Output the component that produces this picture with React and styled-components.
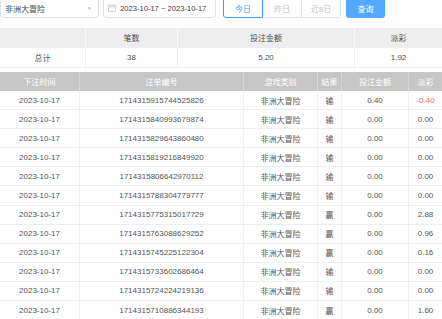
import React from "react";
import styled, { createGlobalStyle } from "styled-components";

const rows = [
  { no: "1714315915744525826", result: "输", bet: "0.40", win: "-0.40" },
  { no: "1714315840993679874", result: "输", bet: "0.00", win: "0.00" },
  { no: "1714315829643860480", result: "输", bet: "0.00", win: "0.00" },
  { no: "1714315819216849920", result: "输", bet: "0.00", win: "0.00" },
  { no: "1714315806642970112", result: "输", bet: "0.00", win: "0.00" },
  { no: "1714315788304779777", result: "输", bet: "0.00", win: "0.00" },
  { no: "1714315775315017729", result: "赢", bet: "0.00", win: "2.88" },
  { no: "1714315763088629252", result: "赢", bet: "0.00", win: "0.96" },
  { no: "1714315745225122304", result: "赢", bet: "0.00", win: "0.16" },
  { no: "1714315733602686464", result: "输", bet: "0.00", win: "0.00" },
  { no: "1714315724224219136", result: "输", bet: "0.00", win: "0.00" },
  { no: "1714315710886344193", result: "赢", bet: "0.00", win: "1.60" },
];

const GlobalStyle = createGlobalStyle`
  body {
    margin: 0;
    background: #fff;
    font-family: "Liberation Sans", "Noto Sans CJK SC", sans-serif;
    font-size: 8px;
    color: #606266;
    overflow: hidden;
  }
`;

const Page = styled.div`
  width: 442px;
  height: 319px;
  overflow: hidden;
`;

const Toolbar = styled.div`
  display: flex;
  align-items: center;
  height: 20px;
  margin-top: -2px;
  margin-bottom: 10px;
`;

const Select = styled.div`
  width: 99px;
  height: 20px;
  box-sizing: border-box;
  border: 1px solid #dcdfe6;
  border-radius: 3px;
  display: flex;
  align-items: center;
  justify-content: space-between;
  padding: 0 6px 0 4px;
  color: #404246;
`;

const Arrow = styled.span`
  color: #b0b3b8;
  font-size: 5px;
`;

const DatePicker = styled.div`
  margin-left: 4px;
  width: 113px;
  height: 20px;
  box-sizing: border-box;
  border: 1px solid #dcdfe6;
  border-radius: 3px;
  display: flex;
  align-items: center;
  padding-left: 4px;
  gap: 4px;
  color: #404246;
  font-size: 7.6px;
  white-space: nowrap;
`;

const Buttons = styled.div`
  display: flex;
  margin-left: 7px;
`;

const DayButton = styled.div`
  width: 40px;
  height: 20px;
  box-sizing: border-box;
  display: flex;
  align-items: center;
  justify-content: center;
  border: 1px solid ${(p) => (p.$active ? "#409eff" : "#dcdfe6")};
  margin-left: ${(p) => (p.$first ? 0 : "-1px")};
  position: relative;
  z-index: ${(p) => (p.$active ? 1 : 0)};
  color: ${(p) => (p.$active ? "#409eff" : "#c0c4cc")};
  border-radius: ${(p) => (p.$first ? "3px 0 0 3px" : p.$last ? "0 3px 3px 0" : "0")};
`;

const Query = styled.div`
  margin-left: 5px;
  width: 39px;
  height: 20px;
  display: flex;
  align-items: center;
  justify-content: center;
  background: #53a8ff;
  color: #fff;
  border-radius: 3px;
`;

const Summary = styled.div`
  display: grid;
  grid-template-columns: 86px 92px 177px 87px;
`;

const SumCell = styled.div`
  height: 20px;
  display: flex;
  align-items: center;
  justify-content: center;
  box-sizing: border-box;
  border-right: 1px solid ${(p) => (p.$head ? "#fafafa" : "#ebeef5")};
  border-bottom: 1px solid #ebeef5;
  background: ${(p) => (p.$head ? "#eeeeee" : "#fff")};
  color: #505050;
  &:nth-child(4n) {
    border-right: none;
  }
`;

const Table = styled.div`
  margin-top: 4px;
  display: grid;
  grid-template-columns: 80px 164px 74px 24px 67px 33px;
`;

const HeadCell = styled.div`
  height: 19px;
  display: flex;
  align-items: center;
  justify-content: center;
  box-sizing: border-box;
  background: #c6c6c6;
  color: #fff;
  border-right: 1px solid #d6d6d6;
  &:nth-child(6) {
    border-right: none;
  }
`;

const Cell = styled.div`
  height: 19.1px;
  display: flex;
  align-items: center;
  justify-content: center;
  box-sizing: border-box;
  border-right: 1px solid #f0f1f4;
  border-bottom: 1px solid #ebeef5;
  color: ${(p) => (p.$red ? "#f56c6c" : "#555")};
  white-space: nowrap;
  &:nth-child(6n) {
    border-right: none;
  }
`;

const CalendarIcon = () => (
  <svg width="8" height="8" viewBox="0 0 8 8" fill="none" stroke="#c0c4cc" strokeWidth="0.7">
    <rect x="0.5" y="1.2" width="7" height="6.3" />
    <line x1="0.5" y1="3" x2="7.5" y2="3" />
    <line x1="2.2" y1="0.3" x2="2.2" y2="1.8" />
    <line x1="5.8" y1="0.3" x2="5.8" y2="1.8" />
  </svg>
);

export default function App() {
  return (
    <Page>
      <GlobalStyle />
      <Toolbar>
        <Select>
          <span>非洲大冒险</span>
          <Arrow>▼</Arrow>
        </Select>
        <DatePicker>
          <CalendarIcon />
          <span>2023-10-17 ~ 2023-10-17</span>
        </DatePicker>
        <Buttons>
          <DayButton $active $first>今日</DayButton>
          <DayButton>昨日</DayButton>
          <DayButton $last>近8日</DayButton>
        </Buttons>
        <Query>查询</Query>
      </Toolbar>

      <Summary>
        <SumCell $head />
        <SumCell $head>笔数</SumCell>
        <SumCell $head>投注金额</SumCell>
        <SumCell $head>派彩</SumCell>
        <SumCell>总计</SumCell>
        <SumCell>38</SumCell>
        <SumCell>5.20</SumCell>
        <SumCell>1.92</SumCell>
      </Summary>

      <Table>
        <HeadCell>下注时间</HeadCell>
        <HeadCell>注单编号</HeadCell>
        <HeadCell>游戏类别</HeadCell>
        <HeadCell>结果</HeadCell>
        <HeadCell>投注金额</HeadCell>
        <HeadCell>派彩</HeadCell>
        {rows.map((r) => (
          <React.Fragment key={r.no}>
            <Cell>2023-10-17</Cell>
            <Cell>{r.no}</Cell>
            <Cell>非洲大冒险</Cell>
            <Cell>{r.result}</Cell>
            <Cell>{r.bet}</Cell>
            <Cell $red={r.win.startsWith("-")}>{r.win}</Cell>
          </React.Fragment>
        ))}
      </Table>
    </Page>
  );
}
